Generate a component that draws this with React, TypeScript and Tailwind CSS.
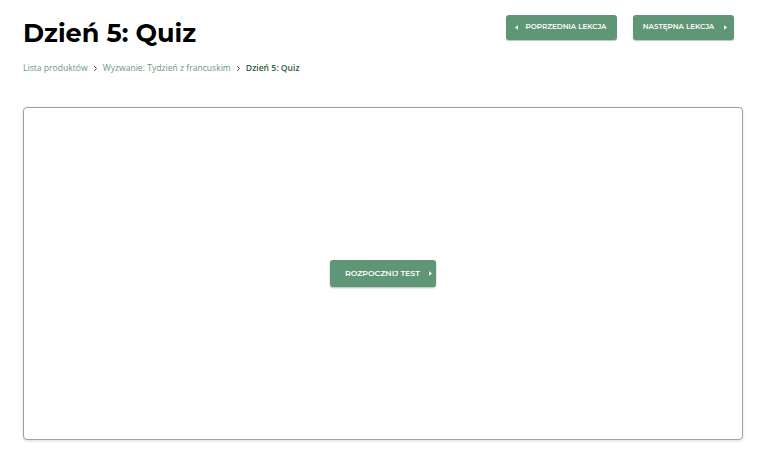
import React from "react";

function Caret({ dir }: { dir: "left" | "right" }) {
  return (
    <svg width="3" height="5" viewBox="0 0 4 6" className="fill-current">
      {dir === "left" ? <path d="M4 0 L0 3 L4 6 Z" /> : <path d="M0 0 L4 3 L0 6 Z" />}
    </svg>
  );
}

function Chevron() {
  return (
    <svg width="5" height="7" viewBox="0 0 5 7" className="mx-[1px]">
      <path d="M1.2 1.2 L3.5 3.5 L1.2 5.8" fill="none" stroke="#444" strokeWidth="1" />
    </svg>
  );
}

export default function App() {
  const font = { fontFamily: "Montserrat, Inter, 'Open Sans', sans-serif" };
  return (
    <div className="h-[454px] w-[768px] bg-white" style={font}>
      <div className="px-[23px] pt-[15px]">
        {/* Header */}
        <div className="flex items-start justify-between">
          <h1 className="mt-[1px] text-[25.5px] font-bold leading-[34px] text-black">
            Dzień 5: Quiz
          </h1>
          <div className="mr-[11px] flex gap-[16px]">
            <button className="flex h-[25px] w-[111px] items-center justify-center gap-[8px] rounded-[3px] bg-[#5f9676] pr-[2px] text-[7.2px] font-semibold text-white shadow-[0_1px_1px_rgba(0,0,0,0.25)]">
              <Caret dir="left" />
              POPRZEDNIA LEKCJA
            </button>
            <button className="flex h-[25px] w-[101px] items-center justify-center gap-[10px] rounded-[3px] bg-[#5f9676] pl-[3px] text-[7.2px] font-semibold text-white shadow-[0_1px_1px_rgba(0,0,0,0.25)]">
              NASTĘPNA LEKCJA
              <Caret dir="right" />
            </button>
          </div>
        </div>

        {/* Breadcrumb */}
        <nav
          className="mt-[12px] flex items-center gap-[4px] text-[8.6px] text-[#6a977d]"
          style={{ fontFamily: "'Open Sans', sans-serif" }}
        >
          <span>Lista produktów</span>
          <Chevron />
          <span>Wyzwanie: Tydzień z francuskim</span>
          <Chevron />
          <span className="font-semibold text-[#2f5c43]">Dzień 5: Quiz</span>
        </nav>

        {/* Quiz box */}
        <div className="mt-[32px] flex h-[333px] w-[720px] items-center justify-center rounded-[4px] border border-[#9ca3a0] bg-white shadow-[0_1px_3px_rgba(0,0,0,0.15)]">
          <button className="flex h-[27px] w-[106px] items-center justify-between rounded-[3px] bg-[#5f9676] pl-[15px] pr-[4px] text-[7.8px] font-semibold text-white shadow-[0_1px_2px_rgba(0,0,0,0.3)]">
            ROZPOCZNIJ TEST
            <Caret dir="right" />
          </button>
        </div>
      </div>
    </div>
  );
}
